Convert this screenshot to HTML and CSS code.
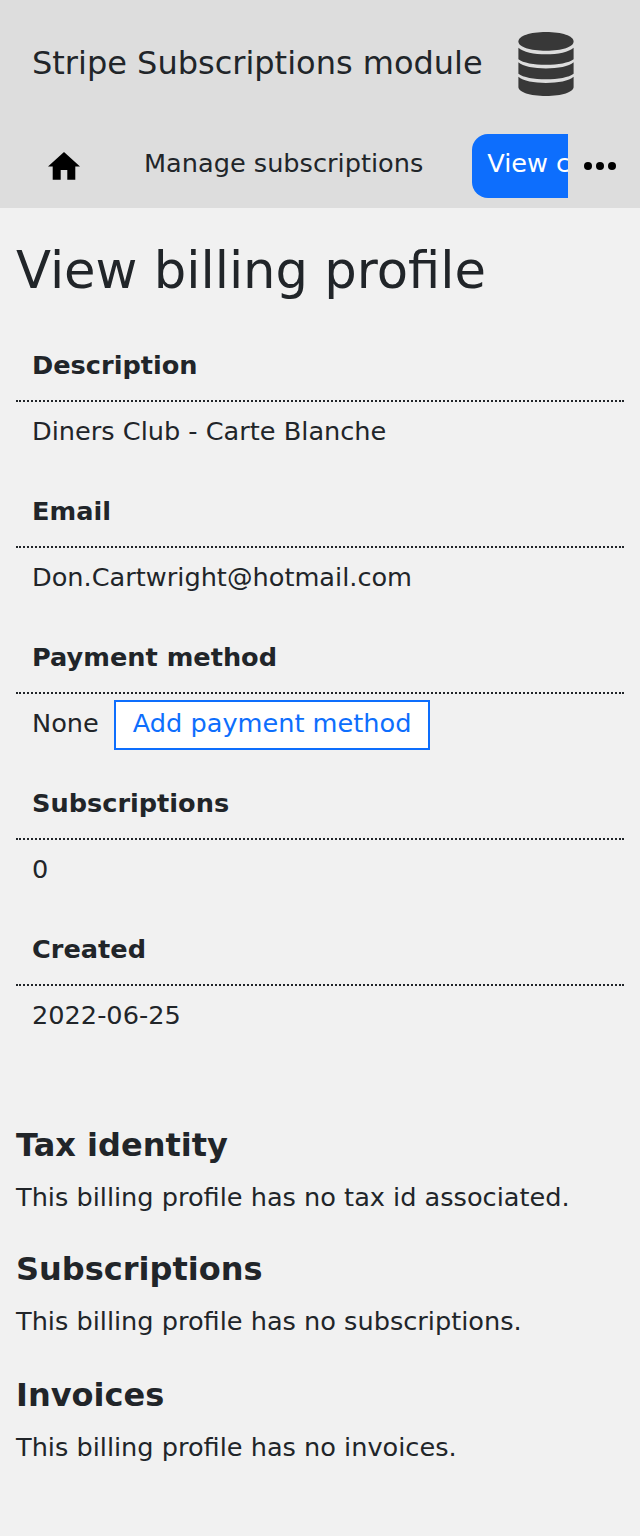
FILE: index.html
```
<!DOCTYPE html>
<html lang="en">
<head>
<meta charset="utf-8">
<title>View billing profile</title>
<link rel="stylesheet" href="styles.css">
</head>
<body>
<header class="header">
  <div class="brand">
    <span class="brand-title">Stripe Subscriptions module</span>
    <svg class="brand-logo" viewBox="0 0 56 64" aria-hidden="true">
      <path d="M.4 9.500C.4 4 12 0 28 0s27.600 4 27.600 9.500S44 18.700 28 18.700 .4 15 .4 9.500z"/>
      <path d="M.4 15.700C5 20 16 22.300 28 22.300s23-2.300 27.600-6.600v11.600C51 31 40 32.800 28 32.800S5 31 .4 27.300z"/>
      <path d="M.4 30.300C5 34.500 16 36.500 28 36.500s23-2 27.600-6.200v11.500C51 45.500 40 47.300 28 47.300S5 45.500 .4 41.800z"/>
      <path d="M.4 44.800C5 49 16 51 28 51s23-2 27.600-6.200V55c0 5-11.600 9-27.600 9S.4 60 .4 55z"/>
    </svg>
  </div>
  <nav class="nav">
    <div class="tabs">
      <a class="home"><svg viewBox="0 0 32 32" aria-hidden="true"><path d="M16 2 0 16.500h4.700v13.300h8V20h6.600v9.800h8V16.500H32z"/></svg></a>
      <a class="tab">Manage subscriptions</a>
      <a class="tab active">View customer</a>
    </div>
    <button class="more" aria-label="More"><svg viewBox="0 0 32 8"><circle cx="4" cy="4" r="4"/><circle cx="16" cy="4" r="4"/><circle cx="28" cy="4" r="4"/></svg></button>
  </nav>
</header>
<main class="main">
  <h1 class="title">View billing profile</h1>
  <dl class="details">
    <dt class="term">Description</dt><dd class="value">Diners Club - Carte Blanche</dd>
    <dt class="term">Email</dt><dd class="value">Don.Cartwright@hotmail.com</dd>
    <dt class="term">Payment method</dt><dd class="value">None <a class="button">Add payment method</a></dd>
    <dt class="term">Subscriptions</dt><dd class="value">0</dd>
    <dt class="term">Created</dt><dd class="value">2022-06-25</dd>
  </dl>
  <section class="section"><h2 class="heading">Tax identity</h2><p class="text">This billing profile has no tax id associated.</p></section>
  <section class="section"><h2 class="heading">Subscriptions</h2><p class="text">This billing profile has no subscriptions.</p></section>
  <section class="section"><h2 class="heading">Invoices</h2><p class="text">This billing profile has no invoices.</p></section>
</main>
</body>
</html>
```
FILE: styles.css
```
* { box-sizing: border-box; }
body { margin: 0; background: #f1f1f1; color: #212529; font: 25.6px/38px "DejaVu Sans", sans-serif; }
.header { height: 208px; background: #ddd; }
.brand { display: flex; align-items: center; gap: 35px; height: 128px; padding-left: 32px; }
.brand-title { padding-bottom: 2px; font-size: 32px; line-height: 48px; white-space: nowrap; }
.brand-logo { width: 56px; height: 64px; fill: #383838; }
.nav { display: flex; height: 80px; }
.tabs { display: flex; width: 568px; padding-top: 6px; overflow: hidden; }
.home { flex: none; width: 96px; padding: 16px 0 0 48px; height: 64px; }
.home svg { display: block; width: 32px; height: 32px; }
.tab { flex: none; height: 64px; padding: 10px 16px; margin-left: 32px; white-space: nowrap; }
.tab.active { margin-left: 32.6px; padding-left: 15.4px; background: #0d6efd; color: #fff; border-radius: 16px; }
.more { display: block; width: 72px; padding: 34px 24px 38px 16px; border: 0; background: none; }
.more svg { display: block; width: 32px; height: 8px; }
.main { padding: 32px 16px; }
.title { margin: 0; font-size: 51.2px; font-weight: 400; line-height: 61px; }
.details { margin: 37px 0 0; }
.term { height: 64px; padding: 8px 16px 0; font-weight: 700; border-bottom: 2px dotted #212529; }
.value { display: flex; gap: 15px; height: 82px; margin: 0; padding: 10px 16px 0; }
.button { height: 50px; margin-top: -4px; padding: 2px 17px; border: 2px solid #0d6efd; background: #fff; color: #0d6efd; }
.section { height: 124px; }
.details + .section { margin-top: 58px; }
.section:last-child { margin-top: 2px; }
.heading { margin: 0; font-size: 32px; line-height: 38px; }
.text { margin: 14px 0 0; }
```
